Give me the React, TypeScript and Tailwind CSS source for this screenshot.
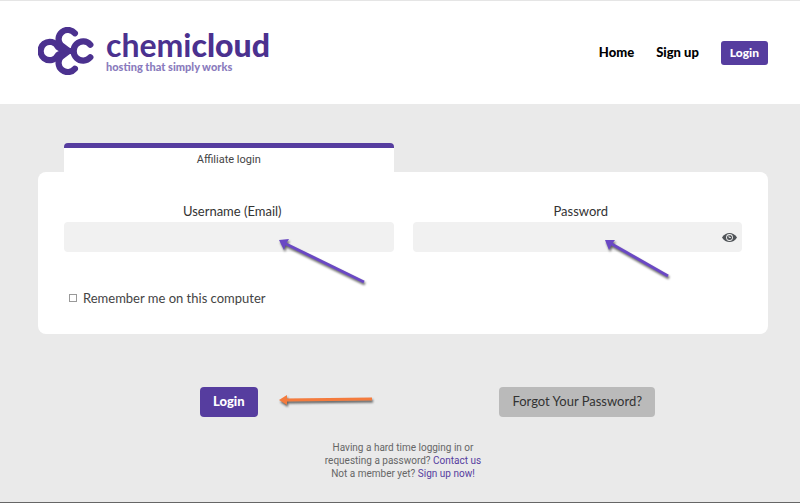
import { useState } from 'react'

const NAV_LINKS = ['Home', 'Sign up']

function Logo() {
  return (
    <a href="#" className="flex items-center gap-3" aria-label="chemicloud">
      <svg viewBox="11 13 170 146" className="h-12 w-14" fill="none" stroke="#4b318f" strokeWidth="19" strokeLinecap="round" strokeLinejoin="round">
        <path d="M92 86 L72 74 A28 28 0 1 0 72 98 L92 86" />
        <path d="M123 32 A28 28 0 1 0 80 68 L104 86" />
        <path d="M123 140 A28 28 0 1 1 80 104 L104 86" />
        <path d="M170 67 A29 29 0 1 0 170 105" />
        <path d="M98 86 H118" />
      </svg>
      <span className="flex flex-col font-['Lato',sans-serif]">
        <span className="text-[32px] leading-8 font-bold text-[#4b318f]">
          chemi<span className="font-black">cloud</span>
        </span>
        <span className="text-[11px] leading-3 font-black text-[#8a7bbd]">hosting that simply works</span>
      </span>
    </a>
  )
}

function EyeIcon() {
  return (
    <svg viewBox="0 0 30 18" className="h-[9px] w-[15px]">
      <path d="M0 9 C7 -3 23 -3 30 9 C23 21 7 21 0 9Z" fill="#505458" />
      <circle cx="15" cy="9" r="6.8" fill="#f1f1f1" />
      <circle cx="15" cy="9" r="5" fill="#505458" />
      <path d="M14 5 V9 H18" stroke="#f1f1f1" strokeWidth="1.6" fill="none" />
    </svg>
  )
}

type ArrowProps = { className: string; width: number; height: number; color: string; line: string; head: string }

function Arrow({ className, width, height, color, line, head }: ArrowProps) {
  return (
    <svg
      width={width}
      height={height}
      viewBox={`0 0 ${width} ${height}`}
      className={`pointer-events-none absolute overflow-visible drop-shadow-[1px_2px_1px_rgba(0,0,0,0.6)] ${className}`}
      aria-hidden="true"
    >
      <path d={line} stroke={color} strokeWidth="3" />
      <path d={head} fill={color} />
    </svg>
  )
}

export default function App() {
  const [username, setUsername] = useState('')
  const [password, setPassword] = useState('')
  const [visible, setVisible] = useState(false)
  const [remember, setRemember] = useState(false)

  return (
    <div className="flex min-h-screen flex-col border-b border-[#666] bg-[#eaeaea] font-['Lato',sans-serif] text-[#333]">
      {/* Header */}
      <header className="flex h-[104px] items-center justify-between border-t border-[#e5e5e5] bg-white pr-8 pb-1 pl-[38px]">
        <Logo />
        <nav className="flex items-center gap-[22px] pt-1 text-[13px] font-black text-black">
          {NAV_LINKS.map((label) => (
            <a key={label} href="#">{label}</a>
          ))}
          <a href="#" className="rounded-[3px] bg-[#563d9f] px-[9px] py-1 text-[12px] leading-4 text-white">Login</a>
        </nav>
      </header>

      <main className="pr-8 pl-[38px] pt-[39px]">
        <form onSubmit={(e) => e.preventDefault()}>
          {/* Tab */}
          <div className="grid grid-cols-2 gap-[19px] px-[26px]">
            <button type="button" className="h-[29px] rounded-t border-t-[5px] border-[#563d9f] bg-white font-['Roboto',sans-serif] text-[11px] text-[#444]">
              Affiliate login
            </button>
          </div>

          {/* Fields */}
          <section className="rounded-lg bg-white px-[26px] pt-[31px] pb-[26px]">
            <div className="grid grid-cols-2 gap-[19px]">
              <div className="relative">
                <label htmlFor="username" className="block pb-0.5 pl-[7px] text-center text-[13px] leading-[17px]">Username (Email)</label>
                <input
                  id="username"
                  value={username}
                  onChange={(e) => setUsername(e.target.value)}
                  className="block h-[30px] w-full rounded bg-[#f1f1f1] px-3 text-[13px] outline-none"
                />
                <Arrow
                  className="top-9 left-[65%]"
                  width={88}
                  height={46}
                  color="#6a48c4"
                  line="M6 4 L86 43"
                  head="M1 1 L11 0 L8 5 L6 11Z"
                />
              </div>
              <div className="relative">
                <label htmlFor="password" className="block pb-0.5 pl-[7px] text-center text-[13px] leading-[17px]">Password</label>
                <div className="flex items-center rounded bg-[#f1f1f1] pr-[5px]">
                  <input
                    id="password"
                    type={visible ? 'text' : 'password'}
                    value={password}
                    onChange={(e) => setPassword(e.target.value)}
                    className="block h-[30px] min-w-0 flex-1 bg-transparent px-3 text-[13px] outline-none"
                  />
                  <button type="button" onClick={() => setVisible(!visible)} aria-label="Show password">
                    <EyeIcon />
                  </button>
                </div>
                <Arrow
                  className="top-9 left-[58%]"
                  width={66}
                  height={40}
                  color="#6a48c4"
                  line="M6 4 L64 37"
                  head="M1 1 L11 1 L8 5 L5 11Z"
                />
              </div>
            </div>
            <label className="mt-9 flex items-center gap-[6px] pl-[5px] text-[13px] leading-5 text-[#444]">
              <input
                type="checkbox"
                checked={remember}
                onChange={(e) => setRemember(e.target.checked)}
                className="size-2 appearance-none border border-[#999] bg-white checked:bg-[#563d9f]"
              />
              Remember me on this computer
            </label>
          </section>

          {/* Actions */}
          <div className="mt-[53px] grid grid-cols-2 gap-[19px] px-[26px]">
            <div className="relative flex justify-center">
              <button type="submit" className="h-[30px] rounded bg-[#563d9f] px-[13px] text-[13px] font-black text-white">Login</button>
              <Arrow
                className="top-2 left-[65%]"
                width={96}
                height={12}
                color="#f47b3d"
                line="M8 5 L94 4"
                head="M1 5 L9 0 L9 10Z"
              />
            </div>
            <div className="flex justify-center">
              <button type="button" className="h-[30px] rounded bg-[#bababa] px-[13px] text-[13px] text-[#333]">Forgot Your Password?</button>
            </div>
          </div>
        </form>

        <p className="mt-6 text-center font-['Roboto',sans-serif] text-[10px] leading-[13px] text-[#666]">
          Having a hard time logging in or
          <br />
          requesting a password? <a href="#" className="text-[#563d9f]">Contact us</a>
          <br />
          Not a member yet? <a href="#" className="text-[#563d9f]">Sign up now!</a>
        </p>
      </main>
    </div>
  )
}
